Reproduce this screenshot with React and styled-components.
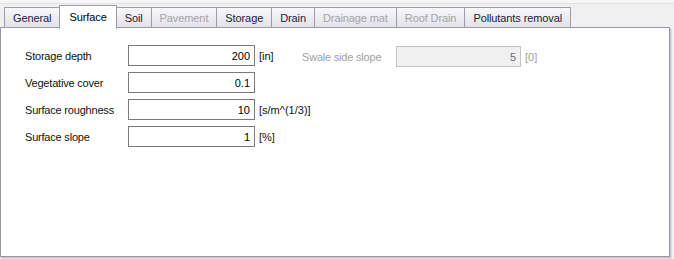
import React from "react";
import styled, { createGlobalStyle } from "styled-components";

const Global = createGlobalStyle`
  html, body {
    margin: 0;
    padding: 0;
    background: #f0f0f0;
    font-family: "Liberation Sans", Arial, sans-serif;
    font-size: 11px;
  }
`;

const Page = styled.div`
  width: 674px;
  height: 259px;
  box-sizing: border-box;
  border-top: 3px solid #f6f6f6;
  background: #f0f0f0;
`;

const TopLine = styled.div`
  height: 1px;
  background: #e2e2e2;
`;

const TabStrip = styled.div`
  display: flex;
  align-items: flex-end;
  height: 24px;
  padding-left: 4px;
`;

const Tab = styled.div`
  position: relative;
  box-sizing: border-box;
  height: ${(p) => (p.$active ? "24px" : "21px")};
  margin-left: -1px;
  margin-bottom: ${(p) => (p.$active ? "-1px" : "0")};
  padding: ${(p) => (p.$active ? "0 9px 2px" : "0 8px")};
  display: flex;
  align-items: center;
  justify-content: center;
  border: 1px solid #9c9cad;
  border-bottom: ${(p) => (p.$active ? "none" : "1px solid #9c9cad")};
  background: ${(p) =>
    p.$active ? "#ffffff" : "linear-gradient(#f8f8fa, #e2e2e8)"};
  color: ${(p) => (p.$disabled ? "#a3a3ad" : p.$active ? "#000" : "#22223e")};
  font-size: 11px;
  letter-spacing: -0.1px;
  z-index: ${(p) => (p.$active ? 2 : 1)};
  white-space: nowrap;
  &:first-child {
    margin-left: 0;
  }
`;

const Panel = styled.div`
  position: relative;
  box-sizing: border-box;
  width: 670px;
  height: 230px;
  margin-top: -1px;
  background: #ffffff;
  border: 1px solid #9898a8;
  box-shadow: 1px 1px 0 #c6c6ce, 2px 2px 0 #e0e0e4;
  padding: 17px 0 0 24px;
  display: flex;
`;

const Column = styled.div`
  display: flex;
  flex-direction: column;
  gap: 6px;
  flex-shrink: 0;
  width: ${(p) => p.$width || "auto"};
`;

const Row = styled.div`
  display: flex;
  align-items: center;
  height: 21px;
  margin-top: ${(p) => p.$offset || "0"};
`;

const Label = styled.div`
  flex-shrink: 0;
  width: ${(p) => p.$width};
  color: ${(p) => (p.$disabled ? "#a0a0a0" : "#111")};
  font-size: 11px;
  letter-spacing: -0.2px;
  white-space: nowrap;
`;

const Field = styled.input`
  flex-shrink: 0;
  box-sizing: border-box;
  width: ${(p) => p.$width};
  height: 21px;
  margin: 0;
  padding: 0 4px 0 2px;
  border: 1px solid ${(p) => (p.$disabled ? "#c4c4c4" : "#7a7a7a")};
  background: ${(p) => (p.$disabled ? "#f0f0f0" : "#fff")};
  color: ${(p) => (p.$disabled ? "#6d6d6d" : "#000")};
  font-family: "Liberation Sans", Arial, sans-serif;
  font-size: 11px;
  text-align: right;
  outline: none;
`;

const Unit = styled.div`
  margin-left: 4px;
  white-space: nowrap;
  color: ${(p) => (p.$disabled ? "#a0a0a0" : "#111")};
`;

const tabs = [
  { name: "General" },
  { name: "Surface", active: true },
  { name: "Soil" },
  { name: "Pavement", disabled: true },
  { name: "Storage" },
  { name: "Drain" },
  { name: "Drainage mat", disabled: true },
  { name: "Roof Drain", disabled: true },
  { name: "Pollutants removal" },
];

const rows = [
  { label: "Storage depth", value: "200", unit: "[in]" },
  { label: "Vegetative cover", value: "0.1", unit: "" },
  { label: "Surface roughness", value: "10", unit: "[s/m^(1/3)]" },
  { label: "Surface slope", value: "1", unit: "[%]" },
];

const App = () => {
  return (
    <Page>
      <Global />
      <TopLine />
      <TabStrip>
        {tabs.map((t) => (
          <Tab key={t.name} $active={t.active} $disabled={t.disabled}>
            {t.name}
          </Tab>
        ))}
      </TabStrip>
      <Panel>
        <Column $width="277px">
          {rows.map((r) => (
            <Row key={r.label}>
              <Label $width="103px">{r.label}</Label>
              <Field $width="127px" readOnly value={r.value} />
              <Unit>{r.unit}</Unit>
            </Row>
          ))}
        </Column>
        <Column>
          <Row $offset="1px">
            <Label $width="94px" $disabled>
              Swale side slope
            </Label>
            <Field $width="125px" $disabled disabled readOnly value="5" />
            <Unit $disabled>[0]</Unit>
          </Row>
        </Column>
      </Panel>
    </Page>
  );
};

export default App;
